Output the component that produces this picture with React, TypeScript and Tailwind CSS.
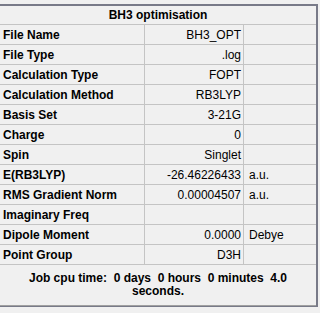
const rows: { label: string; value: string; unit?: string }[] = [
  { label: 'File Name', value: 'BH3_OPT' },
  { label: 'File Type', value: '.log' },
  { label: 'Calculation Type', value: 'FOPT' },
  { label: 'Calculation Method', value: 'RB3LYP' },
  { label: 'Basis Set', value: '3-21G' },
  { label: 'Charge', value: '0' },
  { label: 'Spin', value: 'Singlet' },
  { label: 'E(RB3LYP)', value: '-26.46226433', unit: 'a.u.' },
  { label: 'RMS Gradient Norm', value: '0.00004507', unit: 'a.u.' },
  { label: 'Imaginary Freq', value: '' },
  { label: 'Dipole Moment', value: '0.0000', unit: 'Debye' },
  { label: 'Point Group', value: 'D3H' },
]

export default function App() {
  return (
    <div className="w-[320px] h-[313px] bg-[#f0f0f0] pt-[4px] font-['Liberation_Sans',Arial,sans-serif] text-[12px] text-black">
      <div className="w-[318px] border-t-2 border-r-2 border-b border-[#787a88]">
        {/* title */}
        <div className="h-[19px] flex items-center justify-center font-bold border-b border-[#c4c4c4]">
          BH3 optimisation
        </div>

        {rows.map((r) => (
          <div key={r.label} className="grid grid-cols-[145px_99px_72px] h-[20px] border-b border-[#c4c4c4]">
            <div className="flex items-center pl-[3px] font-bold border-r border-[#c4c4c4] leading-none">
              {r.label}
            </div>
            <div className="flex items-center justify-end pr-[2px] border-r border-[#c4c4c4] leading-none">
              {r.value}
            </div>
            <div className="flex items-center pl-[5px] leading-none">{r.unit}</div>
          </div>
        ))}

        {/* footer */}
        <div className="h-[41px] flex items-center justify-center px-[22px] text-center font-bold leading-[13px] whitespace-pre-wrap border-b border-[#a0a0a0]">
          {'Job cpu time:  0 days  0 hours  0 minutes  4.0 seconds.'}
        </div>
      </div>
    </div>
  )
}
